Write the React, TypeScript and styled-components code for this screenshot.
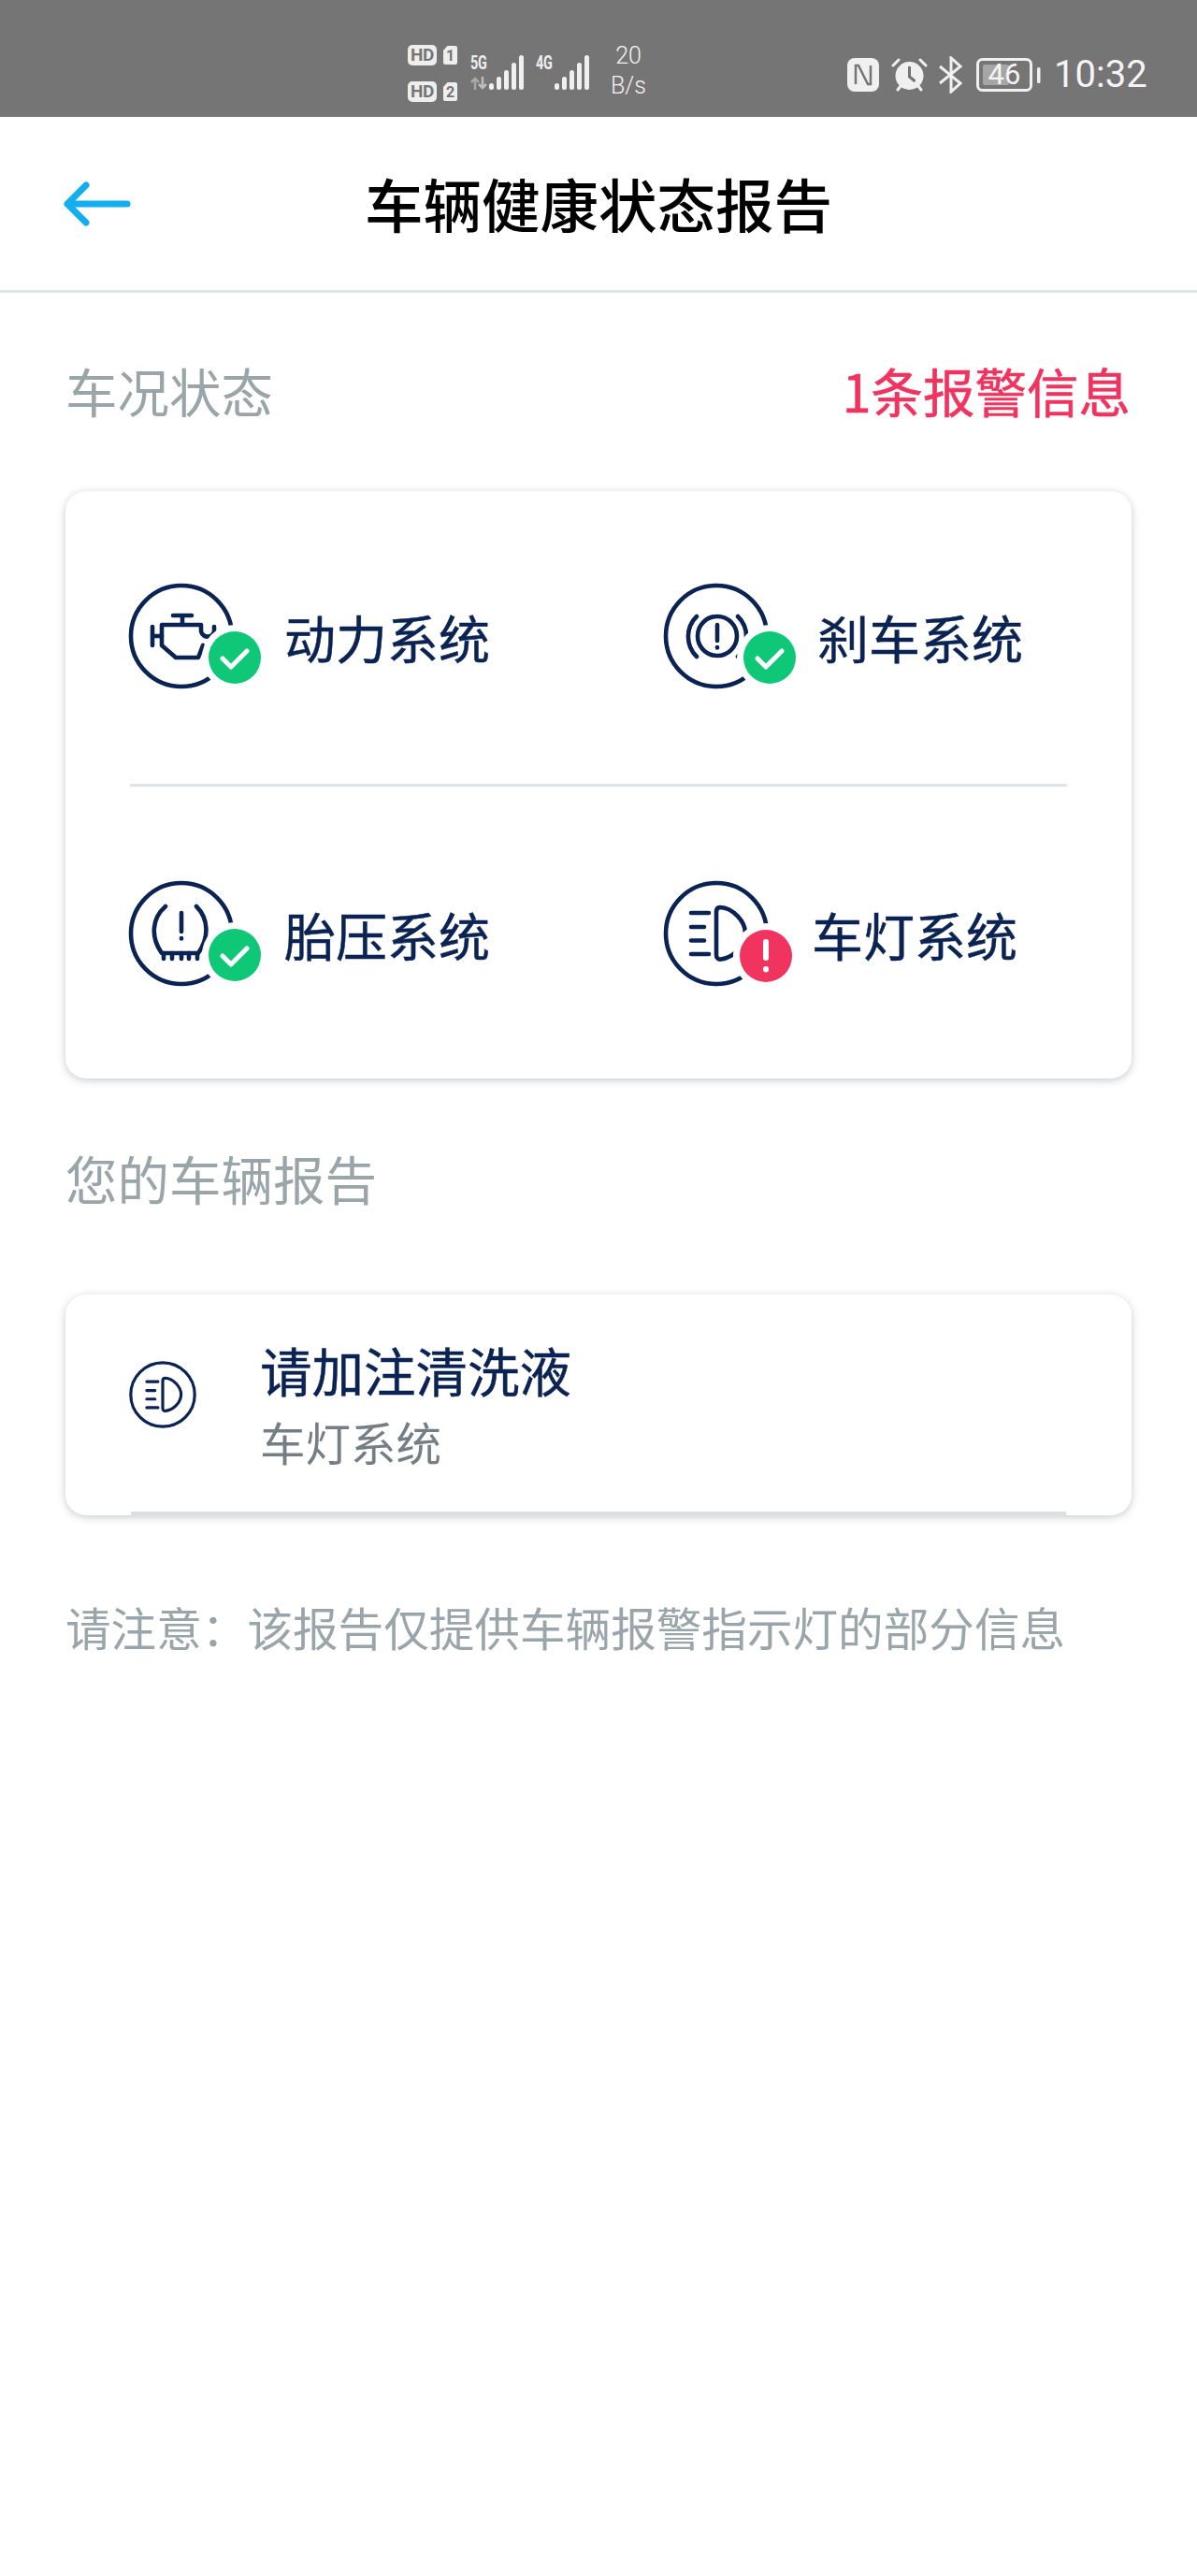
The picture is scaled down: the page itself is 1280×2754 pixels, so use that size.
import React from "react";
import styled, { createGlobalStyle } from "styled-components";

const CJK = `"Noto Sans CJK SC", "Noto Sans", sans-serif`;
const NAVY = "#0b2352";
const GREEN = "#0fc877";
const RED = "#f0335f";
const GREY = "#9aa5aa";

const GlobalStyle = createGlobalStyle`
  html, body { margin: 0; padding: 0; background: #fff; }
  body { font-family: ${CJK}; }
`;

const Page = styled.div`
  width: 1280px;
  height: 2754px;
  background: #fff;
  overflow: hidden;
`;

/* ---------- system status bar ---------- */
const StatusBar = styled.div`
  height: 125px;
  background: #757575;
  color: #f2f2f2;
  display: flex;
  align-items: flex-start;
  padding-left: 436px;
  box-sizing: border-box;
`;
const SimColumn = styled.div`
  margin-top: 48px;
  display: flex;
  flex-direction: column;
  gap: 17px;
`;
const SimRow = styled.div`
  display: flex;
  gap: 7px;
  align-items: center;
`;
const HdPill = styled.span`
  width: 31px;
  height: 22px;
  border-radius: 5px;
  background: #eeeeee;
  color: #757575;
  font: 700 19px/22px "Roboto", sans-serif;
  text-align: center;
  letter-spacing: -0.5px;
`;
const SimTag = styled.span`
  width: 15px;
  height: 20px;
  background: #eeeeee;
  color: #757575;
  border-radius: 2px;
  clip-path: polygon(30% 0, 100% 0, 100% 100%, 0 100%, 0 25%);
  font: 700 16px/21px "Roboto", sans-serif;
  text-align: center;
`;
const Net = styled.div<{ $left: number }>`
  margin-left: ${(p) => p.$left}px;
  margin-top: 58px;
  display: flex;
  align-items: flex-start;
`;
const NetLabels = styled.div`
  width: 20px;
  display: flex;
  flex-direction: column;
  gap: 5px;
`;
const NetLabel = styled.span`
  font: 700 20px/19px "Roboto", sans-serif;
  transform: scaleX(0.72);
  transform-origin: left center;
  letter-spacing: -0.3px;
  color: #eeeeee;
`;
const Speed = styled.div`
  margin-left: 21px;
  margin-top: 47px;
  width: 40px;
  display: flex;
  flex-direction: column;
  align-items: center;
  gap: 6px;
  font: 300 25px/26px "Roboto", sans-serif;
`;
const SpeedLine = styled.span`
  white-space: nowrap;
`;
const StatusIcons = styled.div`
  margin-left: 214px;
  margin-top: 60px;
  display: flex;
  align-items: center;
  height: 40px;
`;
const IconSlot = styled.div<{ $left: number }>`
  margin-left: ${(p) => p.$left}px;
  display: flex;
  position: relative;
`;
const BatteryLevel = styled.span`
  position: absolute;
  left: 7px;
  top: 2px;
  width: 46px;
  text-align: center;
  font: 400 31px/32px "Roboto", sans-serif;
  color: #f4f4f4;
`;
const Clock = styled.span`
  margin-left: 14px;
  font: 400 40px/40px "Roboto", sans-serif;
  color: #f4f4f4;
  white-space: nowrap;
`;

/* ---------- navigation header ---------- */
const Header = styled.header`
  height: 185px;
  display: grid;
  grid-template-columns: 1fr auto 1fr;
  align-items: center;
  border-bottom: 3px solid #dde6e6;
`;
const BackButton = styled.div`
  padding-left: 66px;
  display: flex;
`;
const Title = styled.h1`
  margin: -2px 0 0;
  font: 500 62.500px/80px ${CJK};
  color: #000;
`;

/* ---------- page body ---------- */
const Body = styled.main`
  padding: 0 70px;
`;
const SectionHead = styled.div<{ $top: number }>`
  margin-top: ${(p) => p.$top}px;
  height: 80px;
  display: flex;
  justify-content: space-between;
  align-items: center;
`;
const SectionTitle = styled.h2`
  margin: -6px 0 0;
  font: 400 55.500px/80px ${CJK};
  color: ${GREY};
`;
const AlertCount = styled.span`
  margin: -6px 1px 0 0;
  font: 400 55.500px/80px ${CJK};
  -webkit-text-stroke: 0.6px ${RED};
  color: ${RED};
`;
const Card = styled.section<{ $top: number }>`
  margin-top: ${(p) => p.$top}px;
  background: #fff;
  border-radius: 22px;
  box-shadow: 0 2px 9px rgba(40, 50, 60, 0.26);
`;
const StatusCard = styled(Card)`
  padding: 95px 64px 95px;
`;
const SystemRow = styled.div`
  display: grid;
  grid-template-columns: 572px 440px;
`;
const SystemCell = styled.div<{ $gap: number }>`
  display: flex;
  align-items: center;
  gap: ${(p) => p.$gap}px;
`;
const SystemName = styled.span`
  font: 400 55px/80px ${CJK};
  -webkit-text-stroke: 0.5px ${NAVY};
  color: ${NAVY};
`;
const SystemIcon = styled.svg`
  width: 150px;
  height: 120px;
  flex: none;
  fill: none;
  stroke: ${NAVY};
  stroke-width: 4.600;
  stroke-linecap: round;
  stroke-linejoin: round;
`;
const RowDivider = styled.hr`
  border: 0;
  height: 3px;
  background: #dbe4ea;
  margin: 98px 5px 97px 5px;
`;
const ReportCard = styled(Card)`
  height: 236px;
  box-sizing: border-box;
  position: relative;
  display: flex;
  align-items: center;
  padding: 0 66px 2px;
  gap: 66px;
`;
const ReportIcon = styled.svg`
  width: 76px;
  height: 76px;
  flex: none;
  margin-top: -20px;
  fill: none;
  stroke: ${NAVY};
  stroke-width: 5;
  stroke-linecap: round;
  stroke-linejoin: round;
`;
const ReportText = styled.div`
  display: flex;
  flex-direction: column;
`;
const ReportTitle = styled.span`
  font: 400 55.500px/76px ${CJK};
  -webkit-text-stroke: 0.5px ${NAVY};
  color: ${NAVY};
`;
const ReportSource = styled.span`
  margin-top: 3px;
  font: 400 48.500px/72px ${CJK};
  color: #747e84;
`;
const ReportRule = styled.div`
  position: absolute;
  left: 70px;
  right: 70px;
  bottom: 0;
  height: 4px;
  background: #dcdfe2;
`;
const Notice = styled.p`
  margin: 89px 0 0;
  font: 400 48.600px/60px ${CJK};
  color: ${GREY};
  white-space: nowrap;
`;

/* ---------- drawings ---------- */
const Ring = () => <circle cx="60" cy="60" r="54" />;

const StatusBadge = ({ kind, light }: { kind: "ok" | "alert"; light?: boolean }) => {
  const cx = light ? 113 : 117;
  const cy = light ? 84 : 83;
  return (
    <g>
      <circle cx={cx} cy={cy} r="35" fill="#fff" stroke="none" />
      <circle cx={cx} cy={cy} r="28" fill={kind === "ok" ? GREEN : RED} stroke="none" />
      {kind === "ok" ? (
        <path d={`M${cx - 13} ${cy + 1}l9 9 17-17`} stroke="#fff" strokeWidth="5" />
      ) : (
        <g stroke="#fff" strokeWidth="6">
          <path d={`M${cx} ${cy - 15}v17`} />
          <path d={`M${cx} ${cy + 14}v.5`} />
        </g>
      )}
    </g>
  );
};

const EngineGlyph = () => (
  <>
    <Ring />
    <path d="M51 38h20M61 38v10M29 50v20M29 60h10" />
    <path d="M39 48v22l15 13h24l5-13M39 48h42v7a7 7 0 0 0 14-3v-2" />
  </>
);
const BrakeGlyph = () => (
  <>
    <Ring />
    <circle cx="61" cy="60" r="21" />
    <path d="M39 39a30 30 0 0 0 0 43M83 39a30 30 0 0 1 0 43" />
    <path d="M61 48v17M61 72v.5" />
  </>
);
const TyreGlyph = () => (
  <>
    <Ring />
    <path d="M43 31c-15 13-16 33-4 50h39c12-17 11-37-2-50" />
    <path d="M41 81v6M50 81v6M60 81v6M68 81v6M77 81v6M60 38v20M60 65v.5" />
  </>
);
const HeadlampGlyph = () => (
  <>
    <Ring />
    <path d="M33 38h19M33 53h14M33 67.5h14M33 82h19" />
    <path d="M64 32c-3 0-4 2-4 5v46c0 3 2 5 5 4.500 14-2 26-15 26-28 0-12-13-27-27-27.500z" />
  </>
);

const SignalBars = () => (
  <svg width="38" height="38" viewBox="0 0 38 38" fill="#f0f0f0">
    <rect x="0" y="31" width="5" height="7" rx="2.500" />
    <rect x="8" y="24" width="5" height="14" rx="2.500" />
    <rect x="16" y="17" width="5" height="21" rx="2.500" />
    <rect x="24" y="9" width="5" height="29" rx="2.500" />
    <rect x="32" y="1" width="5" height="37" rx="2.500" />
  </svg>
);

const ArrowsGlyph = () => (
  <svg width="18" height="14" viewBox="0 0 18 14" fill="none" stroke="#a9a9a9" strokeWidth="2.500">
    <path d="M5 14V2M1 6l4-4 4 4" />
    <path d="M13 0v12M9 8l4 4 4-4" stroke="#bdbdbd" />
  </svg>
);

const sections = [
  [
    { name: "动力系统", gap: 20, kind: "ok" as const, glyph: <EngineGlyph /> },
    { name: "刹车系统", gap: 18, kind: "ok" as const, glyph: <BrakeGlyph /> },
  ],
  [
    { name: "胎压系统", gap: 20, kind: "ok" as const, glyph: <TyreGlyph /> },
    { name: "车灯系统", gap: 12, kind: "alert" as const, glyph: <HeadlampGlyph />, light: true },
  ],
];

export default function App() {
  return (
    <Page>
      <GlobalStyle />
      <StatusBar>
        <SimColumn>
          <SimRow>
            <HdPill>HD</HdPill>
            <SimTag>1</SimTag>
          </SimRow>
          <SimRow>
            <HdPill>HD</HdPill>
            <SimTag>2</SimTag>
          </SimRow>
        </SimColumn>
        <Net $left={14}>
          <NetLabels>
            <NetLabel>5G</NetLabel>
            <ArrowsGlyph />
          </NetLabels>
          <SignalBars />
        </Net>
        <Net $left={12}>
          <NetLabels>
            <NetLabel>4G</NetLabel>
          </NetLabels>
          <SignalBars />
        </Net>
        <Speed>
          <SpeedLine>20</SpeedLine>
          <SpeedLine>B/s</SpeedLine>
        </Speed>
        <StatusIcons>
          <IconSlot $left={0}>
            <svg width="34" height="36" viewBox="0 0 34 36">
              <rect width="34" height="36" rx="8" fill="#f0f0f0" />
              <path d="M9 28V8h3l10 20h3V8" fill="none" stroke="#757575" strokeWidth="2.500" />
            </svg>
          </IconSlot>
          <IconSlot $left={13}>
            <svg width="39" height="38" viewBox="0 0 39 38">
              <circle cx="19.500" cy="20" r="15" fill="#f0f0f0" />
              <path d="M19.500 10v11l6 5" fill="none" stroke="#757575" strokeWidth="3" />
              <path d="M2 9l6-6M37 9l-6-6M7 35l3-4M32 35l-3-4" stroke="#f0f0f0" strokeWidth="3" strokeLinecap="round" />
            </svg>
          </IconSlot>
          <IconSlot $left={11}>
            <svg width="27" height="40" viewBox="0 0 27 40" fill="none" stroke="#f0f0f0" strokeWidth="3">
              <path d="M2 11l22 18-10 9V2l10 9L2 29" />
            </svg>
          </IconSlot>
          <IconSlot $left={14}>
            <svg width="69" height="36" viewBox="0 0 69 36" fill="none">
              <rect x="1.500" y="1.500" width="57" height="33" rx="5" stroke="#f0f0f0" strokeWidth="3" />
              <rect x="7" y="7" width="28" height="22" rx="2" fill="#a6a6a6" />
              <rect x="65" y="10" width="3.500" height="17" rx="1.500" fill="#f0f0f0" />
            </svg>
            <BatteryLevel>46</BatteryLevel>
          </IconSlot>
          <Clock>10:32</Clock>
        </StatusIcons>
      </StatusBar>

      <Header>
        <BackButton>
          <svg width="76" height="50" viewBox="0 0 76 50" fill="none" stroke="#12aeee" strokeWidth="7" strokeLinecap="round" strokeLinejoin="round">
            <path d="M70 25H6M26 5L6 25l20 20" />
          </svg>
        </BackButton>
        <Title>车辆健康状态报告</Title>
        <div />
      </Header>

      <Body>
        <SectionHead $top={67}>
          <SectionTitle>车况状态</SectionTitle>
          <AlertCount>1条报警信息</AlertCount>
        </SectionHead>

        <StatusCard $top={65}>
          {sections.map((row, i) => (
            <React.Fragment key={i}>
              {i > 0 && <RowDivider />}
              <SystemRow>
                {row.map((s) => (
                  <SystemCell key={s.name} $gap={s.gap}>
                    <SystemIcon viewBox="0 0 150 120">
                      {s.glyph}
                      <StatusBadge kind={s.kind} light={"light" in s} />
                    </SystemIcon>
                    <SystemName>{s.name}</SystemName>
                  </SystemCell>
                ))}
              </SystemRow>
            </React.Fragment>
          ))}
        </StatusCard>

        <SectionHead $top={69}>
          <SectionTitle>您的车辆报告</SectionTitle>
        </SectionHead>

        <ReportCard $top={82}>
          <ReportIcon viewBox="0 0 120 120">
            <HeadlampGlyph />
          </ReportIcon>
          <ReportText>
            <ReportTitle>请加注清洗液</ReportTitle>
            <ReportSource>车灯系统</ReportSource>
          </ReportText>
          <ReportRule />
        </ReportCard>

        <Notice>请注意：该报告仅提供车辆报警指示灯的部分信息</Notice>
      </Body>
    </Page>
  );
}
